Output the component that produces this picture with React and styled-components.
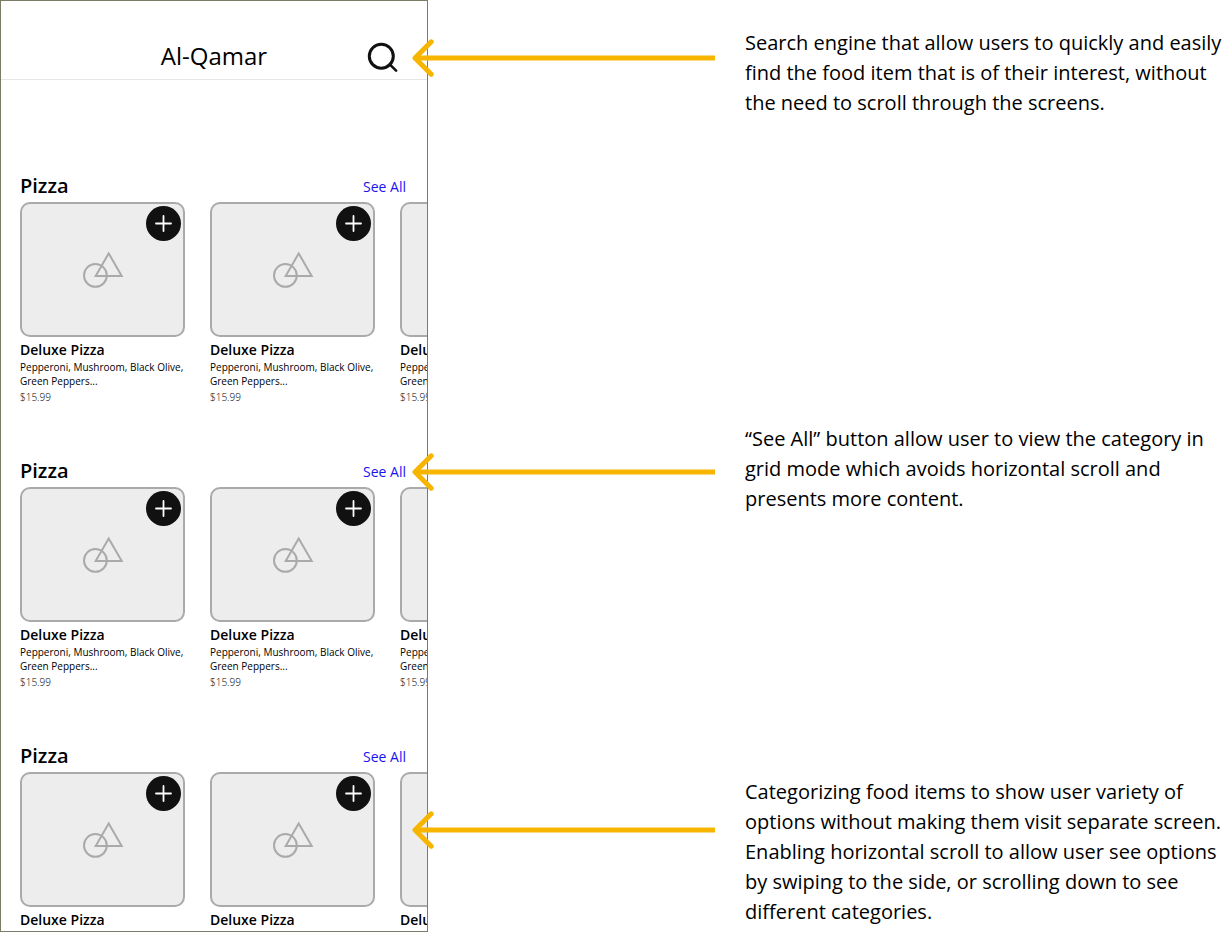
import styled, { createGlobalStyle } from "styled-components";

const GlobalStyle = createGlobalStyle`
  * {
    box-sizing: border-box;
  }

  body {
    margin: 0;
    background: #fff;
    color: #000;
    font-family: "Open Sans", sans-serif;
  }
`;

const Page = styled.div`
  display: flex;
  height: 100vh;
  overflow: hidden;
`;

const Phone = styled.main`
  flex: 0 0 428px;
  border: 1px solid #7c7c66;
  overflow: hidden;
`;

const TopBar = styled.header`
  display: grid;
  grid-template-columns: 1fr auto 1fr;
  align-items: center;
  height: 79px;
  padding: 32px 28px 0;
  border-bottom: 1px solid #e6e6e6;

  h1 {
    grid-column: 2;
    margin: 0;
    font-size: 24px;
    font-weight: 400;
    line-height: 32px;
  }
`;

const SearchButton = styled.button`
  display: flex;
  justify-self: end;
  padding: 0;
  border: none;
  background: none;
  color: #111;
`;

const Menu = styled.div`
  display: flex;
  flex-direction: column;
  gap: 53px;
  padding-top: 92px;
`;

const CategoryHead = styled.div`
  display: flex;
  justify-content: space-between;
  align-items: flex-end;
  height: 30px;
  padding: 0 21px 2px 19px;

  h2 {
    margin: 0;
    font-size: 20px;
    font-weight: 600;
    line-height: 28px;
  }

  a {
    color: #1a12f0;
    font-size: 14px;
    line-height: 26px;
    text-decoration: none;
  }
`;

const CardRow = styled.div`
  display: flex;
  gap: 25px;
  padding-left: 19px;
  overflow-x: auto;
  scrollbar-width: none;
`;

const Card = styled.article`
  flex: 0 0 165px;

  h3 {
    margin: 3px 0 0;
    font-size: 14px;
    font-weight: 600;
    line-height: 20px;
  }

  p {
    margin: 0;
    font-size: 10px;
    line-height: 14px;
  }
`;

const Price = styled.div`
  margin-top: 2px;
  font-size: 10px;
  font-weight: 300;
  line-height: 14px;
`;

const Thumb = styled.div`
  position: relative;
  display: flex;
  align-items: center;
  justify-content: center;
  height: 135px;
  border: 2px solid #aaa;
  border-radius: 10px;
  background: #ededed;
`;

const AddButton = styled.button`
  position: absolute;
  top: 2px;
  right: 2px;
  width: 35px;
  height: 35px;
  padding: 0;
  border: none;
  border-radius: 50%;
  background: #111;

  svg {
    display: block;
  }
`;

const Notes = styled.aside`
  position: relative;
  z-index: 1;
  flex: 1;
  min-width: 0;
  margin-left: -16px;
`;

const Note = styled.div`
  display: flex;
  align-items: flex-start;
  gap: 30px;
  padding-top: ${(props) => props.$space};

  svg {
    flex: none;
    margin-top: ${(props) => props.$drop};
  }

  p {
    flex: 1;
    margin: 0;
    font-size: 20px;
    line-height: 30px;
  }
`;

const pizza = {
  name: "Deluxe Pizza",
  toppings: "Pepperoni, Mushroom, Black Olive, Green Peppers...",
  price: "$15.99",
};

const categories = [
  { id: "pizza-1", title: "Pizza", items: [pizza, pizza, pizza] },
  { id: "pizza-2", title: "Pizza", items: [pizza, pizza, pizza] },
  { id: "pizza-3", title: "Pizza", items: [pizza, pizza, pizza] },
];

const notes = [
  {
    space: "28px",
    drop: "11px",
    text: "Search engine that allow users to quickly and easily find the food item that is of their interest, without the need to scroll through the screens.",
  },
  {
    space: "306px",
    drop: "29px",
    text: "“See All” button allow user to view the category in grid mode which avoids horizontal scroll and presents more content.",
  },
  {
    space: "263px",
    drop: "34px",
    text: "Categorizing food items to show user variety of options without making them visit separate screen. Enabling horizontal scroll to allow user see options by swiping to the side, or scrolling down to see different categories.",
  },
];

const SearchIcon = () => (
  <svg width="32" height="32" viewBox="0 0 32 32" fill="none" stroke="currentColor" strokeWidth="3">
    <circle cx="14.3" cy="16.2" r="12" />
    <path d="M22.7 24.4l6.4 6.2" strokeWidth="2.6" strokeLinecap="round" />
  </svg>
);

const PlusIcon = () => (
  <svg width="35" height="35" viewBox="0 0 35 35" fill="none" stroke="#fff" strokeWidth="1.8" strokeLinecap="round">
    <path d="M17.5 10v15M10 17.5h15" />
  </svg>
);

const ShapesIcon = () => (
  <svg width="43" height="37" viewBox="0 0 43 37" fill="none" stroke="#aaa" strokeWidth="2">
    <circle cx="14.4" cy="24.4" r="11.4" />
    <path d="M27.7 2.4L40.7 25H14.7z" />
  </svg>
);

const Arrow = () => (
  <svg width="303" height="38" viewBox="0 0 303 38" fill="none" stroke="#f7b500" strokeWidth="5">
    <path d="M3 19h300" />
    <path d="M19.2 2.8L3 19l16.2 16.2" strokeLinecap="round" strokeLinejoin="round" />
  </svg>
);

const FoodCard = ({ item }) => {
  return (
    <Card>
      <Thumb>
        <ShapesIcon />
        <AddButton aria-label={`Add ${item.name}`}>
          <PlusIcon />
        </AddButton>
      </Thumb>
      <h3>{item.name}</h3>
      <p>{item.toppings}</p>
      <Price>{item.price}</Price>
    </Card>
  );
};

const App = () => {
  return (
    <>
      <GlobalStyle />
      <Page>
        <Phone>
          <TopBar>
            <h1>Al-Qamar</h1>
            <SearchButton aria-label="Search">
              <SearchIcon />
            </SearchButton>
          </TopBar>
          <Menu>
            {categories.map((category) => (
              <section key={category.id}>
                <CategoryHead>
                  <h2>{category.title}</h2>
                  <a href={`#${category.id}`}>See All</a>
                </CategoryHead>
                <CardRow>
                  {category.items.map((item, i) => (
                    <FoodCard key={i} item={item} />
                  ))}
                </CardRow>
              </section>
            ))}
          </Menu>
        </Phone>
        <Notes>
          {notes.map((note) => (
            <Note key={note.text} $space={note.space} $drop={note.drop}>
              <Arrow />
              <p>{note.text}</p>
            </Note>
          ))}
        </Notes>
      </Page>
    </>
  );
};

export default App;
